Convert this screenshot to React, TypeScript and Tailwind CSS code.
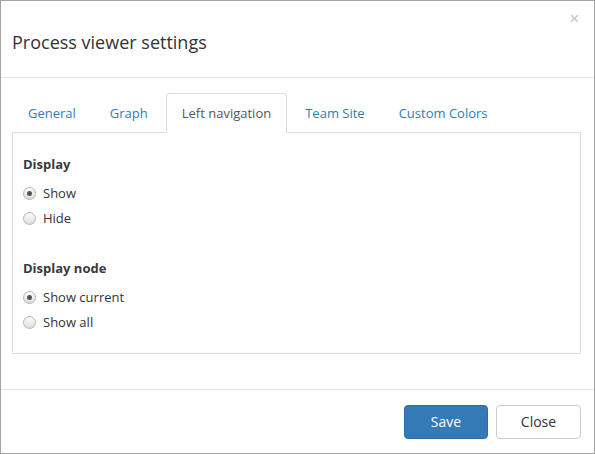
import React, { useState } from 'react'

const tabs = ['General', 'Graph', 'Left navigation', 'Team Site', 'Custom Colors']

const Radio: React.FC<{ checked: boolean; label: string; onClick: () => void }> = ({ checked, label, onClick }) => (
  <label className="flex items-center h-[25px] cursor-pointer" onClick={onClick}>
    <span className="w-[13px] h-[13px] rounded-full border border-[#b4b4b4] bg-gradient-to-b from-[#fdfdfd] to-[#dcdcdc] flex items-center justify-center">
      {checked && <span className="w-[5px] h-[5px] rounded-full bg-[#555]" />}
    </span>
    <span className="ml-[7px] text-[13px] text-[#333]">{label}</span>
  </label>
)

export default function App() {
  const [active, setActive] = useState('Left navigation')
  const [display, setDisplay] = useState('show')
  const [node, setNode] = useState('current')

  return (
    <div className="w-[595px] h-[454px] bg-white border border-[#a3a3a3] flex flex-col font-['Open_Sans',sans-serif] text-[#333]">
      {/* Header */}
      <div className="h-[77px] shrink-0 border-b border-[#e5e5e5] flex items-center pl-[11px] relative">
        <h4 className="text-[18px] leading-none mt-[6px]">Process viewer settings</h4>
        <button className="absolute right-[15px] top-[12px] w-[10px] h-[10px] flex items-center justify-center">
          <svg width="9" height="9" viewBox="0 0 9 9">
            <path d="M1 1 L8 8 M8 1 L1 8" stroke="#c9c9c9" strokeWidth="1.6" />
          </svg>
        </button>
      </div>

      {/* Body */}
      <div className="flex-1 pt-[15px] pl-[11px] pr-[13px]">
        <div className="flex">
          {tabs.map((t) => (
            <button
              key={t}
              onClick={() => setActive(t)}
              className={`h-[40px] px-[15px] pt-[2px] mr-[2px] mb-[-1px] text-[13px] rounded-t-[4px] border relative ${
                active === t
                  ? 'border-[#ddd] border-b-white bg-white text-[#555]'
                  : 'border-transparent text-[#337ab7]'
              }`}
            >
              {t}
            </button>
          ))}
        </div>
        <div className="border border-[#ddd] pt-[22px] pb-[18px] pl-[10px]">
          <div className="text-[13px] font-bold leading-[18px] text-[#3a3a3a]">Display</div>
          <div className="mt-[8px]">
            <Radio checked={display === 'show'} label="Show" onClick={() => setDisplay('show')} />
            <Radio checked={display === 'hide'} label="Hide" onClick={() => setDisplay('hide')} />
          </div>
          <div className="text-[13px] font-bold leading-[18px] text-[#3a3a3a] mt-[28px]">Display node</div>
          <div className="mt-[8px]">
            <Radio checked={node === 'current'} label="Show current" onClick={() => setNode('current')} />
            <Radio checked={node === 'all'} label="Show all" onClick={() => setNode('all')} />
          </div>
        </div>
      </div>

      {/* Footer */}
      <div className="h-[64px] shrink-0 border-t border-[#e5e5e5] flex justify-end items-start pt-[15px] pr-[13px]">
        <button className="w-[84px] h-[34px] pb-[2px] rounded-[4px] bg-[#337ab7] border border-[#2e6da4] text-white text-[14px]">
          Save
        </button>
        <button className="w-[85px] h-[34px] pb-[2px] ml-[8px] rounded-[4px] bg-white border border-[#ccc] text-[#333] text-[14px]">
          Close
        </button>
      </div>
    </div>
  )
}
